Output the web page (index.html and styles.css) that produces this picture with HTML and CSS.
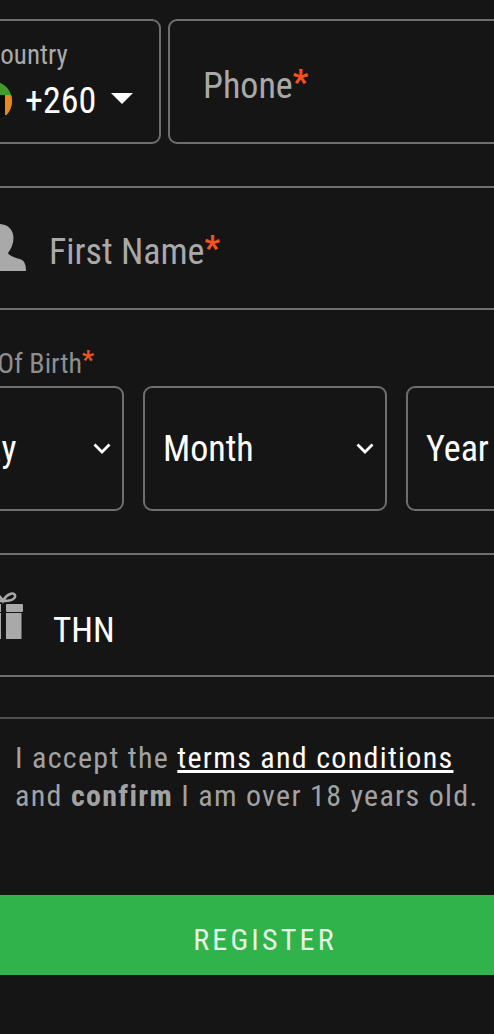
FILE: index.html
```html
<!DOCTYPE html>
<html lang="en">
<head>
    <meta charset="UTF-8">
    <meta name="viewport" content="width=device-width, initial-scale=1.0">
    <title>Register</title>
    <link rel="stylesheet" href="styles.css">
</head>
<body>
    <form class="form">
        <div class="phone-row">
            <div class="box country">
                <span class="country-label">Country</span>
                <div class="country-value">
                    <svg class="flag" viewBox="0 0 40 40">
                        <clipPath id="flag-clip"><circle cx="20" cy="20" r="20"></circle></clipPath>
                        <g clip-path="url(#flag-clip)">
                            <rect width="40" height="40" fill="#3f9b2c"></rect>
                            <rect x="33" y="14" width="7" height="22" fill="#e8891c"></rect>
                            <rect y="14" width="33" height="26" fill="#0a0a0a"></rect>
                            <rect x="33" y="34" width="7" height="6" fill="#0a0a0a"></rect>
                        </g>
                    </svg>
                    <span class="code">+260</span>
                    <span class="caret"></span>
                </div>
            </div>
            <div class="box phone">
                <span class="placeholder">Phone<i class="req">*</i></span>
            </div>
        </div>

        <div class="line-field name-field">
            <svg class="icon-user" viewBox="0 0 54 47">
                <path d="M27 0C36 0 41.500 6 41.500 14C41.500 20 39 25 36 29C38 33 46 34 50 36C53 38 54 42 54 47H0C0 42 1 38 4 36C8 34 16 33 18 29C15 25 12.500 20 12.500 14C12.500 6 18 0 27 0Z" fill="#a9a9a9"></path>
            </svg>
            <span class="placeholder">First Name<i class="req">*</i></span>
        </div>

        <div class="dob">
            <div class="dob-label">Date Of Birth<i class="req">*</i></div>
            <div class="dob-row">
                <div class="box select day">
                    <span>Day</span>
                    <svg class="chevron" viewBox="0 0 18 13"><path d="M1.500 2.500 9 10 16.500 2.500" fill="none" stroke="#fff" stroke-width="2.800"></path></svg>
                </div>
                <div class="box select month">
                    <span>Month</span>
                    <svg class="chevron" viewBox="0 0 18 13"><path d="M1.500 2.500 9 10 16.500 2.500" fill="none" stroke="#fff" stroke-width="2.800"></path></svg>
                </div>
                <div class="box select year">
                    <span>Year</span>
                    <svg class="chevron" viewBox="0 0 18 13"><path d="M1.500 2.500 9 10 16.500 2.500" fill="none" stroke="#fff" stroke-width="2.800"></path></svg>
                </div>
            </div>
        </div>

        <div class="line-field promo-field">
            <svg class="icon-gift" viewBox="0 0 54 52">
                <rect x="14" y="15" width="17" height="8" fill="#a9a9a9"></rect>
                <rect x="16" y="24" width="15" height="26" fill="#a9a9a9"></rect>
                <rect x="36" y="15" width="17" height="8" rx="1" fill="#a9a9a9"></rect>
                <rect x="36" y="24" width="15.500" height="26" fill="#a9a9a9"></rect>
                <path d="M33 12C37 4 46 2 45 8C44 12 37 12 33 12C29 12 22 12 21 8C20 2 29 4 33 12Z" fill="none" stroke="#a9a9a9" stroke-width="2.600"></path>
            </svg>
            <span class="promo-value">THN</span>
        </div>

        <p class="terms">I accept the <a href="#" class="terms-link">terms and conditions</a><br>and <b>confirm</b> I am over 18 years old.</p>

        <button type="button" class="register">REGISTER</button>
    </form>
</body>
</html>
```

FILE: styles.css
```css
html, body {
    margin: 0;
    height: 1034px;
    overflow: hidden;
    background-color: #151515;
}

/* the form is wider than the window and sits off both sides */
.form {
    width: 640px;
    margin-left: -56px;
    font-family: "Roboto Condensed", Roboto, sans-serif;
    font-stretch: condensed;
}

.box {
    box-sizing: border-box;
    flex: none;
    height: 125px;
    border: 2px solid #6e6e6e;
    border-radius: 9px;
}

.req {
    position: relative;
    top: -4px;
    color: #f4511e;
    font-style: normal;
    font-weight: 700;
    font-size: 0.950em;
    line-height: 0;
}

.placeholder {
    color: #a9a9a9;
    font-size: 36px;
}

.phone-row {
    display: flex;
    gap: 7px;
    padding-top: 19px;
}

.country {
    width: 217px;
    padding: 19px 0 0 39px;
}

.country-label {
    display: block;
    color: #a9a9a9;
    font-size: 27px;
    line-height: 30px;
}

.country-value {
    display: flex;
    align-items: center;
    margin: 10px 0 0 -13px;
}

.flag {
    width: 40px;
    height: 40px;
}

.code {
    margin: 0 0 0 13px;
    color: #fff;
    font-size: 36px;
    line-height: 42px;
}

.caret {
    width: 0;
    height: 0;
    margin: -6px 0 0 15px;
    border-left: 11px solid transparent;
    border-right: 11px solid transparent;
    border-top: 11px solid #fff;
}

.phone {
    flex: 1;
    display: flex;
    align-items: center;
    padding: 9px 0 0 33px;
}

.line-field {
    box-sizing: border-box;
    display: flex;
    align-items: center;
    height: 124px;
    border-top: 2px solid #6e6e6e;
    border-bottom: 2px solid #6e6e6e;
}

.name-field {
    margin-top: 42px;
    padding-top: 8px;
}

.icon-user {
    width: 54px;
    height: 47px;
    margin: 0 0 9px 28px;
}

.name-field .placeholder {
    margin-left: 23px;
}

.dob {
    margin-top: 36px;
}

.dob-label {
    margin-left: -4px;
    color: #8e8e8e;
    font-size: 28px;
    line-height: 36px;
}

.dob-row {
    display: flex;
    gap: 19px;
    margin-top: 4px;
}

.select {
    display: flex;
    align-items: center;
    justify-content: space-between;
    padding: 0 11px 0 18px;
    color: #fff;
    font-size: 36px;
}

.chevron {
    width: 18px;
    height: 13px;
}

.day {
    width: 180px;
}

.month {
    width: 244px;
}

.year {
    width: 244px;
}

.promo-field {
    margin-top: 42px;
}

.icon-gift {
    width: 54px;
    height: 52px;
    margin: 0 0 0 26px;
}

.promo-value {
    margin: 30px 0 0 29px;
    color: #fff;
    font-size: 35px;
}

.terms {
    margin: 40px 0 0;
    padding: 20px 0 0 71px;
    border-top: 2px solid #4f4f4f;
    color: #a2a2a2;
    font-size: 30px;
    line-height: 38px;
    letter-spacing: 1.300px;
}

.terms-link {
    color: #fff;
    text-decoration: underline;
}

.terms b {
    font-weight: 700;
}

.register {
    display: block;
    width: 100%;
    height: 80px;
    margin-top: 80px;
    padding: 8px 0 0 2px;
    border: 0;
    background-color: #2fb34a;
    color: #e4f6e4;
    font-family: inherit;
    font-stretch: condensed;
    font-size: 30px;
    letter-spacing: 3.200px;
}
```
